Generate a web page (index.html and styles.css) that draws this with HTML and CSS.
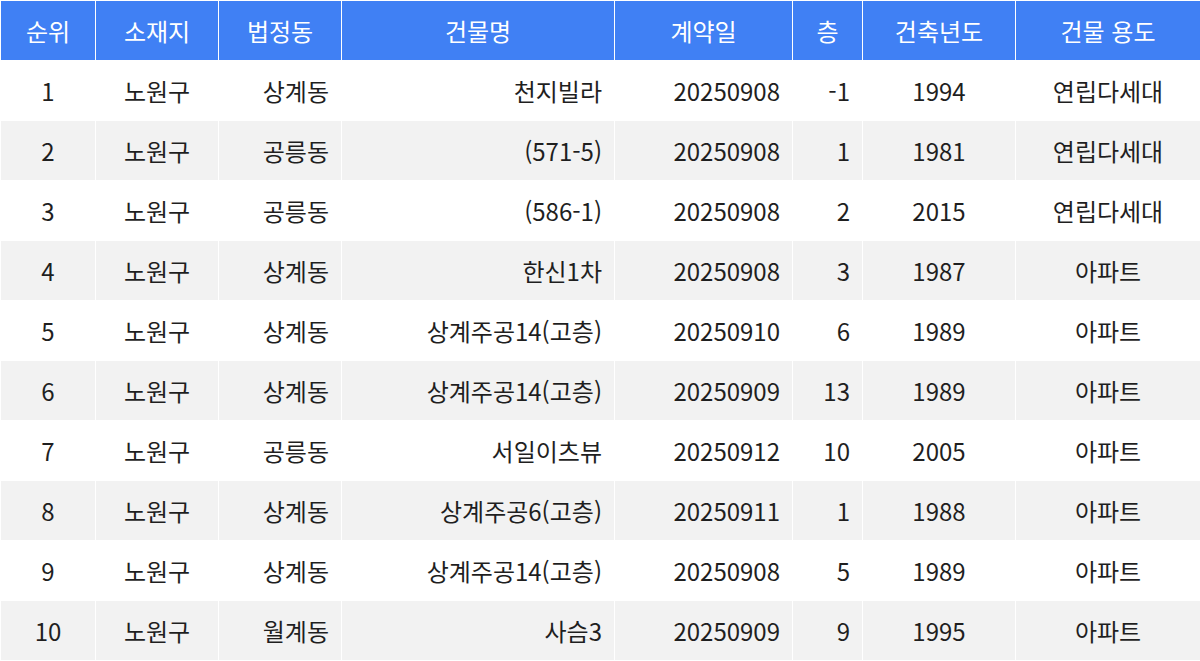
FILE: index.html
```html
<!DOCTYPE html>
<html lang="ko">
<head>
<meta charset="utf-8">
<link rel="stylesheet" href="styles.css">
</head>
<body>
<table class="tbl">
  <colgroup>
    <col class="c1"><col class="c2"><col class="c3"><col class="c4"><col class="c5"><col class="c6"><col class="c7"><col class="c8">
  </colgroup>
  <thead>
    <tr><th>순위</th><th>소재지</th><th>법정동</th><th>건물명</th><th>계약일</th><th>층</th><th>건축년도</th><th>건물 용도</th></tr>
  </thead>
  <tbody>
    <tr><td>1</td><td>노원구</td><td class="r">상계동</td><td class="r">천지빌라</td><td class="r">20250908</td><td class="r">-1</td><td>1994</td><td>연립다세대</td></tr>
    <tr><td>2</td><td>노원구</td><td class="r">공릉동</td><td class="r">(571-5)</td><td class="r">20250908</td><td class="r">1</td><td>1981</td><td>연립다세대</td></tr>
    <tr><td>3</td><td>노원구</td><td class="r">공릉동</td><td class="r">(586-1)</td><td class="r">20250908</td><td class="r">2</td><td>2015</td><td>연립다세대</td></tr>
    <tr><td>4</td><td>노원구</td><td class="r">상계동</td><td class="r">한신1차</td><td class="r">20250908</td><td class="r">3</td><td>1987</td><td>아파트</td></tr>
    <tr><td>5</td><td>노원구</td><td class="r">상계동</td><td class="r">상계주공14(고층)</td><td class="r">20250910</td><td class="r">6</td><td>1989</td><td>아파트</td></tr>
    <tr><td>6</td><td>노원구</td><td class="r">상계동</td><td class="r">상계주공14(고층)</td><td class="r">20250909</td><td class="r">13</td><td>1989</td><td>아파트</td></tr>
    <tr><td>7</td><td>노원구</td><td class="r">공릉동</td><td class="r">서일이츠뷰</td><td class="r">20250912</td><td class="r">10</td><td>2005</td><td>아파트</td></tr>
    <tr><td>8</td><td>노원구</td><td class="r">상계동</td><td class="r">상계주공6(고층)</td><td class="r">20250911</td><td class="r">1</td><td>1988</td><td>아파트</td></tr>
    <tr><td>9</td><td>노원구</td><td class="r">상계동</td><td class="r">상계주공14(고층)</td><td class="r">20250908</td><td class="r">5</td><td>1989</td><td>아파트</td></tr>
    <tr><td>10</td><td>노원구</td><td class="r">월계동</td><td class="r">사슴3</td><td class="r">20250909</td><td class="r">9</td><td>1995</td><td>아파트</td></tr>
  </tbody>
</table>
</body>
</html>
```
FILE: styles.css
```css
html, body {
  margin: 0;
  padding: 0;
  background: #ffffff;
}
body {
  font-family: "Noto Sans CJK KR", "Noto Sans", sans-serif;
  color: #1f1f1f;
}
.tbl {
  width: 1200px;
  border-collapse: collapse;
  table-layout: fixed;
  font-size: 24px;
}
.c1 { width: 95px; }
.c2 { width: 123px; }
.c3 { width: 123px; }
.c4 { width: 273px; }
.c5 { width: 178px; }
.c6 { width: 70px; }
.c7 { width: 153px; }
.c8 { width: 185px; }
.tbl th, .tbl td {
  border: 1px solid #ffffff;
  height: 59px;
  padding: 0 12px;
  text-align: center;
  white-space: nowrap;
  line-height: 1;
}
.tbl th {
  background: #4080f4;
  color: #ffffff;
  font-weight: 400;
}
.tbl tbody tr:nth-child(even) td {
  background: #f2f2f2;
}
.tbl td.r {
  text-align: right;
}
```
